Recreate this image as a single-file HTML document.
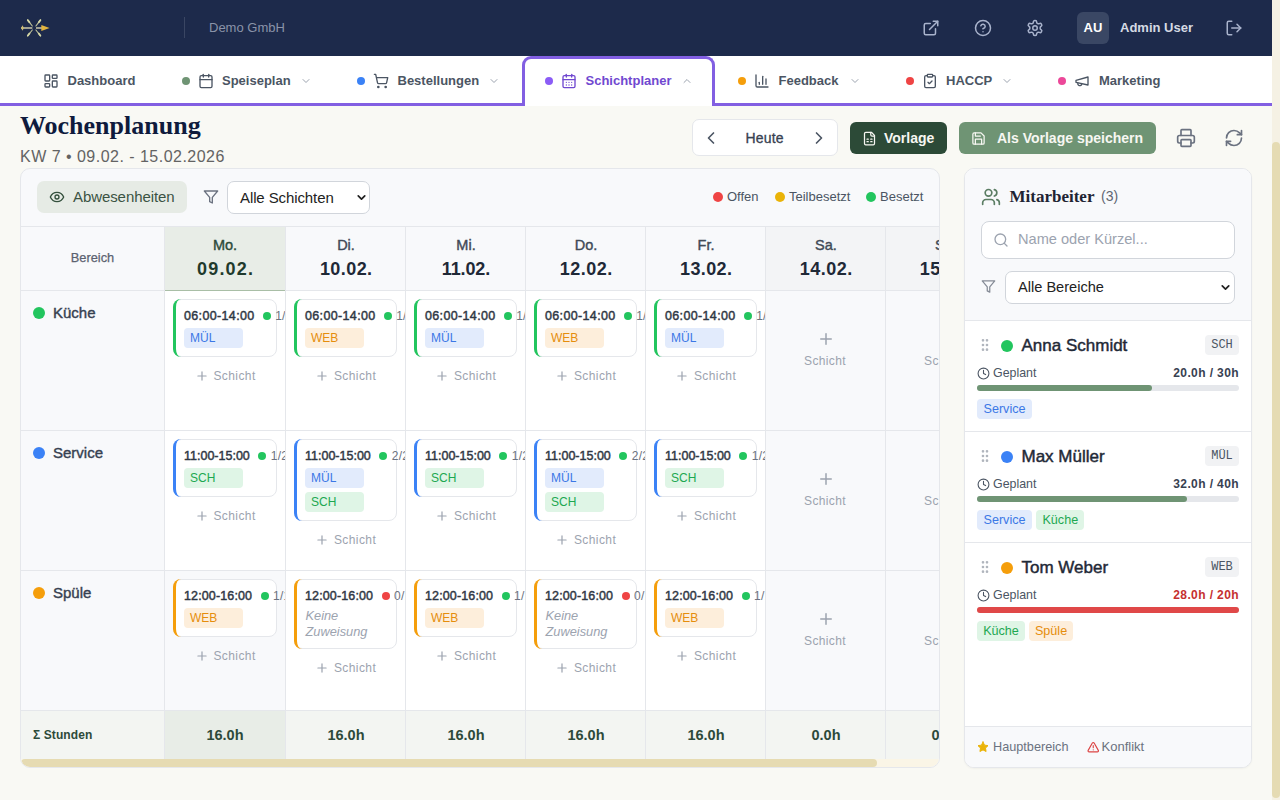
<!DOCTYPE html><html><head><meta charset="utf-8"><style>
*{box-sizing:border-box;margin:0;padding:0}
html,body{width:1280px;height:800px;overflow:hidden}
body{background:#f9f9f4;font-family:"Liberation Sans",sans-serif;position:relative;color:#1f2937}
.a{position:absolute;white-space:nowrap}
svg{display:block}
.hdr{position:absolute;left:0;top:0;width:1272px;height:56px;background:#1d2a4b}
.nav{position:absolute;left:0;top:56px;width:1272px;height:50px;background:#fff;border-bottom:3px solid #825fe2}
.sbv{position:absolute;left:1272px;top:0;width:8px;height:800px;background:#f5f1e4}
.sbv i{position:absolute;left:0;top:142px;width:8px;height:656px;border-radius:4px;background:#e5dbb3}
.dot{position:absolute;width:8px;height:8px;border-radius:50%}
.tab{font-size:13px;font-weight:bold;color:#4b5563}
.card{position:absolute;left:20px;top:168px;width:920px;height:600px;border:1px solid #e5e7eb;border-radius:10px;background:#f8f9fb;overflow:hidden}
.panel{position:absolute;left:964px;top:168px;width:288px;height:600px;border:1px solid #e5e7eb;border-radius:10px;background:#fff;overflow:hidden;box-shadow:0 1px 2px rgba(0,0,0,.04)}
.vl{position:absolute;width:1px;background:#e5e7eb}
.hl{position:absolute;height:1px;background:#e5e7eb}
.sc{position:absolute;width:103px;background:#fff;border:1px solid #e5e7eb;border-radius:8px;padding:0}
.sc .bl{position:absolute;left:-1px;top:-1px;bottom:-1px;width:10px;border-left:3px solid;border-radius:8px 0 0 8px}
.tm{position:absolute;left:10px;top:8px;font-size:12px;font-weight:bold;letter-spacing:.5px;color:#374151;line-height:17px}
.cnt{position:absolute;top:8px;font-size:12px;color:#6b7280;line-height:17px;letter-spacing:.2px}
.bd{position:absolute;left:10px;width:59px;height:20px;border-radius:4px;font-size:12px;line-height:20px;padding-left:6px}
.b-m{background:#e2ebfc;color:#3b78e6}
.b-s{background:#dff5e6;color:#1da851}
.b-w{background:#fdeedb;color:#e58d0c}
.add{position:absolute;font-size:12px;letter-spacing:.35px;color:#9ca3af;line-height:16px}
</style></head><body>
<div class="hdr"></div>
<svg class="a" style="left:16px;top:16px" width="40" height="24" viewBox="16 16 40 24">
<line x1="21" y1="28" x2="32.3" y2="28" stroke="#b9b6a0" stroke-width="1.7"/>
<line x1="36" y1="28" x2="43" y2="28" stroke="#b9b6a0" stroke-width="1.7"/>
<polygon points="41.3,25 49.6,28 41.3,31" fill="#e3b43f"/>
<polygon points="22.5,25.3 23.9,28 22.5,30.7 21.1,28" fill="#cdbb72"/>
<line x1="27.6" y1="19.8" x2="32.3" y2="26" stroke="#c4c69a" stroke-width="1.1" stroke-linecap="round"/>
<line x1="40.6" y1="19.8" x2="35.9" y2="26" stroke="#c4c69a" stroke-width="1.1" stroke-linecap="round"/>
<line x1="27.6" y1="36" x2="32.3" y2="30" stroke="#c4c69a" stroke-width="1.1" stroke-linecap="round"/>
<line x1="40.6" y1="36" x2="35.9" y2="30" stroke="#c4c69a" stroke-width="1.1" stroke-linecap="round"/>
<line x1="27.9" y1="20.3" x2="29.4" y2="22.3" stroke="#d5d7a6" stroke-width="1.9" stroke-linecap="round"/>
<line x1="40.3" y1="20.3" x2="38.8" y2="22.3" stroke="#d5d7a6" stroke-width="1.9" stroke-linecap="round"/>
<line x1="27.9" y1="35.5" x2="29.4" y2="33.5" stroke="#d5d7a6" stroke-width="1.9" stroke-linecap="round"/>
<line x1="40.3" y1="35.5" x2="38.8" y2="33.5" stroke="#d5d7a6" stroke-width="1.9" stroke-linecap="round"/>
</svg>
<div class="a" style="left:184px;top:17px;width:1px;height:21px;background:#3a4663"></div>
<div class="a" style="left:209px;top:19px;font-size:13px;color:#8a93a8;line-height:18px">Demo GmbH</div>
<div class="a" style="left:922px;top:19px;"><svg width="18" height="18" viewBox="0 0 24 24" fill="none" stroke="#a9b3cc" stroke-width="2" stroke-linecap="round" stroke-linejoin="round" ><path d="M15 3h6v6"/><path d="M10 14 21 3"/><path d="M18 13v6a2 2 0 0 1-2 2H5a2 2 0 0 1-2-2V8a2 2 0 0 1 2-2h6"/></svg></div>
<div class="a" style="left:974px;top:19px;"><svg width="18" height="18" viewBox="0 0 24 24" fill="none" stroke="#a9b3cc" stroke-width="2" stroke-linecap="round" stroke-linejoin="round" ><circle cx="12" cy="12" r="10"/><path d="M9.09 9a3 3 0 0 1 5.83 1c0 2-3 3-3 3"/><path d="M12 17h.01"/></svg></div>
<div class="a" style="left:1026px;top:19px;"><svg width="18" height="18" viewBox="0 0 24 24" fill="none" stroke="#a9b3cc" stroke-width="2" stroke-linecap="round" stroke-linejoin="round" ><path d="M12.22 2h-.44a2 2 0 0 0-2 2v.18a2 2 0 0 1-1 1.73l-.43.25a2 2 0 0 1-2 0l-.15-.08a2 2 0 0 0-2.73.73l-.22.38a2 2 0 0 0 .73 2.730l.15.1a2 2 0 0 1 1 1.72v.51a2 2 0 0 1-1 1.74l-.15.09a2 2 0 0 0-.73 2.73l.22.38a2 2 0 0 0 2.73.73l.15-.08a2 2 0 0 1 2 0l.43.25a2 2 0 0 1 1 1.73V20a2 2 0 0 0 2 2h.44a2 2 0 0 0 2-2v-.18a2 2 0 0 1 1-1.73l.43-.25a2 2 0 0 1 2 0l.15.08a2 2 0 0 0 2.73-.73l.22-.39a2 2 0 0 0-.73-2.73l-.15-.08a2 2 0 0 1-1-1.74v-.5a2 2 0 0 1 1-1.74l.15-.09a2 2 0 0 0 .73-2.73l-.22-.38a2 2 0 0 0-2.73-.73l-.15.08a2 2 0 0 1-2 0l-.43-.25a2 2 0 0 1-1-1.73V4a2 2 0 0 0-2-2z"/><circle cx="12" cy="12" r="3"/></svg></div>
<div class="a" style="left:1077px;top:12px;width:32px;height:32px;border-radius:6px;background:#3a4764;color:#fff;font-size:13px;font-weight:bold;text-align:center;line-height:32px">AU</div>
<div class="a" style="left:1120px;top:19px;font-size:13px;font-weight:bold;color:#d5dae4;line-height:18px">Admin User</div>
<div class="a" style="left:1225px;top:19px;"><svg width="18" height="18" viewBox="0 0 24 24" fill="none" stroke="#a9b3cc" stroke-width="2" stroke-linecap="round" stroke-linejoin="round" ><path d="M9 21H5a2 2 0 0 1-2-2V5a2 2 0 0 1 2-2h4"/><polyline points="16 17 21 12 16 7"/><line x1="21" x2="9" y1="12" y2="12"/></svg></div>
<div class="nav"></div>
<div class="a" style="left:522px;top:56px;width:193px;height:50px;border:3px solid #825fe2;border-bottom:none;border-radius:9px 9px 0 0;background:#fff"></div>
<div class="a" style="left:43px;top:73px;"><svg width="16" height="16" viewBox="0 0 24 24" fill="none" stroke="#4b5563" stroke-width="2" stroke-linecap="round" stroke-linejoin="round" ><rect width="7" height="9" x="3" y="3" rx="1"/><rect width="7" height="5" x="14" y="3" rx="1"/><rect width="7" height="9" x="14" y="12" rx="1"/><rect width="7" height="5" x="3" y="16" rx="1"/></svg></div>
<div class="a" style="left:67.5px;top:72px;font-size:13px;font-weight:bold;color:#4b5563;line-height:17px">Dashboard</div>
<div class="dot" style="left:182px;top:77px;background:#6f9474"></div>
<div class="a" style="left:198px;top:73px;"><svg width="16" height="16" viewBox="0 0 24 24" fill="none" stroke="#4b5563" stroke-width="2" stroke-linecap="round" stroke-linejoin="round" ><path d="M8 2v4"/><path d="M16 2v4"/><rect width="18" height="18" x="3" y="4" rx="2"/><path d="M3 10h18"/></svg></div>
<div class="a" style="left:222px;top:72px;font-size:13px;font-weight:bold;color:#4b5563;line-height:17px">Speiseplan</div>
<div class="a" style="left:300px;top:75px;"><svg width="12" height="12" viewBox="0 0 24 24" fill="none" stroke="#9ca3af" stroke-width="2" stroke-linecap="round" stroke-linejoin="round" ><path d="m6 9 6 6 6-6"/></svg></div>
<div class="dot" style="left:357px;top:77px;background:#3b82f6"></div>
<div class="a" style="left:373px;top:73px;"><svg width="16" height="16" viewBox="0 0 24 24" fill="none" stroke="#4b5563" stroke-width="2" stroke-linecap="round" stroke-linejoin="round" ><circle cx="8" cy="21" r="1"/><circle cx="19" cy="21" r="1"/><path d="M2.05 2.05h2l2.66 12.42a2 2 0 0 0 2 1.58h9.78a2 2 0 0 0 1.95-1.57l1.65-7.43H5.12"/></svg></div>
<div class="a" style="left:397.5px;top:72px;font-size:13px;font-weight:bold;color:#4b5563;line-height:17px">Bestellungen</div>
<div class="a" style="left:488px;top:75px;"><svg width="12" height="12" viewBox="0 0 24 24" fill="none" stroke="#9ca3af" stroke-width="2" stroke-linecap="round" stroke-linejoin="round" ><path d="m6 9 6 6 6-6"/></svg></div>
<div class="dot" style="left:545px;top:77px;background:#8b5cf6"></div>
<div class="a" style="left:561px;top:73px;"><svg width="16" height="16" viewBox="0 0 24 24" fill="none" stroke="#7048d0" stroke-width="2" stroke-linecap="round" stroke-linejoin="round" ><path d="M8 2v4"/><path d="M16 2v4"/><rect width="18" height="18" x="3" y="4" rx="2"/><path d="M3 10h18"/><path d="M8 14h.01"/><path d="M12 14h.01"/><path d="M16 14h.01"/><path d="M8 18h.01"/><path d="M12 18h.01"/><path d="M16 18h.01"/></svg></div>
<div class="a" style="left:585.5px;top:72px;font-size:13px;font-weight:bold;color:#7048d0;line-height:17px">Schichtplaner</div>
<div class="a" style="left:681px;top:75px;"><svg width="12" height="12" viewBox="0 0 24 24" fill="none" stroke="#9ca3af" stroke-width="2" stroke-linecap="round" stroke-linejoin="round" ><path d="m18 15-6-6-6 6"/></svg></div>
<div class="dot" style="left:738px;top:77px;background:#f59e0b"></div>
<div class="a" style="left:754px;top:73px;"><svg width="16" height="16" viewBox="0 0 24 24" fill="none" stroke="#4b5563" stroke-width="2" stroke-linecap="round" stroke-linejoin="round" ><path d="M3 3v16a2 2 0 0 0 2 2h16"/><path d="M18 17V9"/><path d="M13 17V5"/><path d="M8 17v-3"/></svg></div>
<div class="a" style="left:778.5px;top:72px;font-size:13px;font-weight:bold;color:#4b5563;line-height:17px">Feedback</div>
<div class="a" style="left:849px;top:75px;"><svg width="12" height="12" viewBox="0 0 24 24" fill="none" stroke="#9ca3af" stroke-width="2" stroke-linecap="round" stroke-linejoin="round" ><path d="m6 9 6 6 6-6"/></svg></div>
<div class="dot" style="left:906px;top:77px;background:#ef4444"></div>
<div class="a" style="left:922px;top:73px;"><svg width="16" height="16" viewBox="0 0 24 24" fill="none" stroke="#4b5563" stroke-width="2" stroke-linecap="round" stroke-linejoin="round" ><rect width="8" height="4" x="8" y="2" rx="1" ry="1"/><path d="M16 4h2a2 2 0 0 1 2 2v14a2 2 0 0 1-2 2H6a2 2 0 0 1-2-2V6a2 2 0 0 1 2-2h2"/><path d="m9 14 2 2 4-4"/></svg></div>
<div class="a" style="left:946px;top:72px;font-size:13px;font-weight:bold;color:#4b5563;line-height:17px">HACCP</div>
<div class="a" style="left:1001px;top:75px;"><svg width="12" height="12" viewBox="0 0 24 24" fill="none" stroke="#9ca3af" stroke-width="2" stroke-linecap="round" stroke-linejoin="round" ><path d="m6 9 6 6 6-6"/></svg></div>
<div class="dot" style="left:1058px;top:77px;background:#ec4899"></div>
<div class="a" style="left:1074px;top:73px;"><svg width="16" height="16" viewBox="0 0 24 24" fill="none" stroke="#4b5563" stroke-width="2" stroke-linecap="round" stroke-linejoin="round" ><path d="m3 11 18-5v12L3 14v-3z"/><path d="M11.6 16.8a3 3 0 1 1-5.8-1.6"/></svg></div>
<div class="a" style="left:1099px;top:72px;font-size:13px;font-weight:bold;color:#4b5563;line-height:17px">Marketing</div>
<div class="a" style="left:20px;top:111px;font-family:'Liberation Serif',serif;font-size:26px;font-weight:bold;color:#0f1b3d;line-height:30px">Wochenplanung</div>
<div class="a" style="left:20px;top:147px;font-size:16px;letter-spacing:.48px;color:#636363;line-height:20px">KW 7 • 09.02. - 15.02.2026</div>
<div class="a" style="left:692px;top:119px;width:146px;height:37px;background:#fff;border:1px solid #e5e7eb;border-radius:7px"></div>
<div class="a" style="left:701px;top:128.3px;"><svg width="20" height="20" viewBox="0 0 24 24" fill="none" stroke="#4b5563" stroke-width="2" stroke-linecap="round" stroke-linejoin="round" ><path d="m15 18-6-6 6-6"/></svg></div>
<div class="a" style="left:745.5px;top:129.7px;font-size:14px;color:#374151;line-height:17px;letter-spacing:.15px;-webkit-text-stroke:.3px #374151">Heute</div>
<div class="a" style="left:808.8px;top:128.3px;"><svg width="20" height="20" viewBox="0 0 24 24" fill="none" stroke="#4b5563" stroke-width="2" stroke-linecap="round" stroke-linejoin="round" ><path d="m9 18 6-6-6-6"/></svg></div>
<div class="a" style="left:850px;top:122px;width:97px;height:32px;background:#2c4a37;border-radius:6px"></div>
<div class="a" style="left:862px;top:130.5px;"><svg width="15" height="15" viewBox="0 0 24 24" fill="none" stroke="#f7f7f2" stroke-width="2" stroke-linecap="round" stroke-linejoin="round" ><path d="M15 2H6a2 2 0 0 0-2 2v16a2 2 0 0 0 2 2h12a2 2 0 0 0 2-2V7Z"/><path d="M14 2v4a2 2 0 0 0 2 2h4"/><path d="M8 13h2"/><path d="M14 13h2"/><path d="M8 17h2"/><path d="M14 17h2"/></svg></div>
<div class="a" style="left:884px;top:130px;font-size:14px;font-weight:bold;color:#f7f7f2;line-height:17px">Vorlage</div>
<div class="a" style="left:959px;top:122px;width:197px;height:32px;background:#6f9474;border-radius:6px"></div>
<div class="a" style="left:971px;top:130.5px;"><svg width="15" height="15" viewBox="0 0 24 24" fill="none" stroke="#f7f7f2" stroke-width="2" stroke-linecap="round" stroke-linejoin="round" ><path d="M19 21H5a2 2 0 0 1-2-2V5a2 2 0 0 1 2-2h11l5 5v11a2 2 0 0 1-2 2z"/><polyline points="17 21 17 13 7 13 7 21"/><polyline points="7 3 7 8 15 8"/></svg></div>
<div class="a" style="left:997px;top:130px;font-size:14px;font-weight:bold;color:#f7f7f2;line-height:17px">Als Vorlage speichern</div>
<div class="a" style="left:1176px;top:128px;"><svg width="20" height="20" viewBox="0 0 24 24" fill="none" stroke="#6b7280" stroke-width="2" stroke-linecap="round" stroke-linejoin="round" ><path d="M6 18H4a2 2 0 0 1-2-2v-5a2 2 0 0 1 2-2h16a2 2 0 0 1 2 2v5a2 2 0 0 1-2 2h-2"/><path d="M6 9V3a1 1 0 0 1 1-1h10a1 1 0 0 1 1 1v6"/><rect x="6" y="14" width="12" height="8" rx="1"/></svg></div>
<div class="a" style="left:1224px;top:128px;"><svg width="20" height="20" viewBox="0 0 24 24" fill="none" stroke="#6b7280" stroke-width="2" stroke-linecap="round" stroke-linejoin="round" ><path d="M3 12a9 9 0 0 1 9-9 9.75 9.75 0 0 1 6.74 2.74L21 8"/><path d="M21 3v5h-5"/><path d="M21 12a9 9 0 0 1-9 9 9.75 9.75 0 0 1-6.74-2.74L3 16"/><path d="M8 16H3v5"/></svg></div>
<div class="card">
<div class="a" style="left:16px;top:12px;width:150px;height:32px;border-radius:7px;background:#e6ebe5"></div>
<div class="a" style="left:28px;top:20px;"><svg width="16" height="16" viewBox="0 0 24 24" fill="none" stroke="#34503d" stroke-width="2" stroke-linecap="round" stroke-linejoin="round" ><path d="M2 12s3-7 10-7 10 7 10 7-3 7-10 7-10-7-10-7Z"/><circle cx="12" cy="12" r="3"/></svg></div>
<div class="a" style="left:52px;top:19px;font-size:15px;color:#3b5343;line-height:17px;letter-spacing:-.08px">Abwesenheiten</div>
<div class="a" style="left:182px;top:20px;"><svg width="16" height="16" viewBox="0 0 24 24" fill="none" stroke="#6b7280" stroke-width="2" stroke-linecap="round" stroke-linejoin="round" ><polygon points="22 3 2 3 10 12.46 10 19 14 21 14 12.46 22 3"/></svg></div>
<div class="a" style="left:206px;top:12px;width:143px;height:33px;border-radius:7px;background:#fff;border:1px solid #d1d5db"></div>
<div class="a" style="left:219px;top:20px;font-size:15px;color:#222;line-height:17px;letter-spacing:-.1px">Alle Schichten</div>
<div class="a" style="left:334px;top:22px;"><svg width="13" height="13" viewBox="0 0 24 24" fill="none" stroke="#222" stroke-width="3.2" stroke-linecap="round" stroke-linejoin="round" ><path d="m6 9 6 6 6-6"/></svg></div>
<div class="a" style="left:692px;top:23px;width:10px;height:10px;border-radius:50%;background:#ef4444"></div>
<div class="a" style="left:706px;top:20px;font-size:13px;color:#4b5563;line-height:16px">Offen</div>
<div class="a" style="left:754px;top:23px;width:10px;height:10px;border-radius:50%;background:#eab308"></div>
<div class="a" style="left:768px;top:20px;font-size:13px;color:#4b5563;line-height:16px">Teilbesetzt</div>
<div class="a" style="left:844.5px;top:23px;width:10px;height:10px;border-radius:50%;background:#22c55e"></div>
<div class="a" style="left:859px;top:20px;font-size:13px;color:#4b5563;line-height:16px">Besetzt</div>
<div class="a" style="left:0px;top:57px;width:918px;height:1px;background:#e5e7eb"></div>
<div class="a" style="left:0px;top:58px;width:918px;height:63px;background:#f8f9fb"></div>
<div class="a" style="left:144px;top:58px;width:120px;height:63px;background:#e8ede7"></div>
<div class="a" style="left:745px;top:58px;width:173px;height:63px;background:#f3f4f6"></div>
<div class="a" style="left:0px;top:122px;width:143px;height:419px;background:#f8f9fb"></div>
<div class="a" style="left:144px;top:122px;width:600px;height:419px;background:#fff"></div>
<div class="a" style="left:745px;top:122px;width:173px;height:419px;background:#f8f9fb"></div>
<div class="a" style="left:144px;top:402px;width:120px;height:139px;background:#f8f9fb"></div>
<div class="a" style="left:0px;top:542px;width:918px;height:48px;background:#f3f5f2"></div>
<div class="a" style="left:144px;top:542px;width:120px;height:48px;background:#e8ede7"></div>
<div class="a" style="left:143px;top:58px;width:1px;height:532px;background:#e5e7eb"></div>
<div class="a" style="left:264px;top:58px;width:1px;height:532px;background:#e5e7eb"></div>
<div class="a" style="left:384px;top:58px;width:1px;height:532px;background:#e5e7eb"></div>
<div class="a" style="left:504px;top:58px;width:1px;height:532px;background:#e5e7eb"></div>
<div class="a" style="left:624px;top:58px;width:1px;height:532px;background:#e5e7eb"></div>
<div class="a" style="left:744px;top:58px;width:1px;height:532px;background:#e5e7eb"></div>
<div class="a" style="left:864px;top:58px;width:1px;height:532px;background:#e5e7eb"></div>
<div class="a" style="left:0px;top:121px;width:918px;height:1px;background:#e5e7eb"></div>
<div class="a" style="left:0px;top:261px;width:918px;height:1px;background:#e5e7eb"></div>
<div class="a" style="left:0px;top:401px;width:918px;height:1px;background:#e5e7eb"></div>
<div class="a" style="left:0px;top:541px;width:918px;height:1px;background:#e5e7eb"></div>
<div class="a" style="left:144px;top:121px;width:120px;height:1px;background:#a9bea6"></div>
<div class="a" style="left:0px;top:82px;width:143px;text-align:center;font-size:12.8px;color:#5b6270;line-height:14px;-webkit-text-stroke:.25px #5b6270">Bereich</div>
<div class="a" style="left:144px;top:68px;width:120px;text-align:center;font-size:14.5px;color:#2d4a3a;line-height:17px;-webkit-text-stroke:.4px #2d4a3a">Mo.</div>
<div class="a" style="left:144px;top:90px;width:120px;text-align:center;font-size:18px;font-weight:bold;letter-spacing:1.15px;text-indent:1.15px;color:#1f3a2c;line-height:20px">09.02.</div>
<div class="a" style="left:265px;top:68px;width:120px;text-align:center;font-size:14.5px;color:#414a57;line-height:17px;-webkit-text-stroke:.4px #414a57">Di.</div>
<div class="a" style="left:265px;top:90px;width:120px;text-align:center;font-size:18px;font-weight:bold;letter-spacing:0.43px;text-indent:0.43px;color:#1f2937;line-height:20px">10.02.</div>
<div class="a" style="left:385px;top:68px;width:120px;text-align:center;font-size:14.5px;color:#414a57;line-height:17px;-webkit-text-stroke:.4px #414a57">Mi.</div>
<div class="a" style="left:385px;top:90px;width:120px;text-align:center;font-size:18px;font-weight:bold;letter-spacing:-0.1px;text-indent:-0.1px;color:#1f2937;line-height:20px">11.02.</div>
<div class="a" style="left:505px;top:68px;width:120px;text-align:center;font-size:14.5px;color:#414a57;line-height:17px;-webkit-text-stroke:.4px #414a57">Do.</div>
<div class="a" style="left:505px;top:90px;width:120px;text-align:center;font-size:18px;font-weight:bold;letter-spacing:0.47px;text-indent:0.47px;color:#1f2937;line-height:20px">12.02.</div>
<div class="a" style="left:625px;top:68px;width:120px;text-align:center;font-size:14.5px;color:#414a57;line-height:17px;-webkit-text-stroke:.4px #414a57">Fr.</div>
<div class="a" style="left:625px;top:90px;width:120px;text-align:center;font-size:18px;font-weight:bold;letter-spacing:0.4px;text-indent:0.4px;color:#1f2937;line-height:20px">13.02.</div>
<div class="a" style="left:745px;top:68px;width:120px;text-align:center;font-size:14.5px;color:#414a57;line-height:17px;-webkit-text-stroke:.4px #414a57">Sa.</div>
<div class="a" style="left:745px;top:90px;width:120px;text-align:center;font-size:18px;font-weight:bold;letter-spacing:0.52px;text-indent:0.52px;color:#1f2937;line-height:20px">14.02.</div>
<div class="a" style="left:865px;top:68px;width:120px;text-align:center;font-size:14.5px;color:#414a57;line-height:17px;-webkit-text-stroke:.4px #414a57">So.</div>
<div class="a" style="left:865px;top:90px;width:120px;text-align:center;font-size:18px;font-weight:bold;letter-spacing:0.45px;text-indent:0.45px;color:#1f2937;line-height:20px">15.02.</div>
<div class="a" style="left:12px;top:138px;width:12px;height:12px;border-radius:50%;background:#22c55e"></div>
<div class="a" style="left:32px;top:134.7px;font-size:15px;color:#374151;line-height:17px;-webkit-text-stroke:.4px #374151">Küche</div>
<div class="a" style="left:12px;top:278px;width:12px;height:12px;border-radius:50%;background:#3b82f6"></div>
<div class="a" style="left:32px;top:274.7px;font-size:15px;color:#374151;line-height:17px;-webkit-text-stroke:.4px #374151">Service</div>
<div class="a" style="left:12px;top:418px;width:12px;height:12px;border-radius:50%;background:#f59e0b"></div>
<div class="a" style="left:32px;top:414.70000000000005px;font-size:15px;color:#374151;line-height:17px;-webkit-text-stroke:.4px #374151">Spüle</div>
<div class="a" style="left:144px;top:122px;width:120px;height:139px;overflow:hidden">
<div class="sc" style="left:8px;top:8px;width:104px;height:58px;overflow:visible"><div class="bl" style="border-left-color:#22c55e"></div><div class="a" style="left:10px;top:8px;display:flex;align-items:center;height:17px"><span style="font-size:12.5px;letter-spacing:0.35px;color:#2f3744;line-height:17px;-webkit-text-stroke:.45px #2f3744">06:00-14:00</span><i style="display:block;width:8px;height:8px;border-radius:50%;background:#22c55e;margin-left:8.15px;margin-top:-2px"></i><span style="margin-left:4.5px;font-size:12px;color:#6b7280;line-height:17px;letter-spacing:.2px">1/1</span></div><div class="bd b-m" style="top:28px">MÜL</div></div>
<div class="a" style="left:29.5px;top:77.5px;"><svg width="14" height="14" viewBox="0 0 24 24" fill="none" stroke="#9ca3af" stroke-width="2.1" stroke-linecap="round" stroke-linejoin="round" ><path d="M5 12h14"/><path d="M12 5v14"/></svg></div>
<div class="a" style="left:48.400000000000006px;top:77px;font-size:12px;letter-spacing:.42px;color:#9ca3af;line-height:16px">Schicht</div>
</div>
<div class="a" style="left:265px;top:122px;width:119px;height:139px;overflow:hidden">
<div class="sc" style="left:8px;top:8px;width:103px;height:58px;overflow:visible"><div class="bl" style="border-left-color:#22c55e"></div><div class="a" style="left:10px;top:8px;display:flex;align-items:center;height:17px"><span style="font-size:12.5px;letter-spacing:0.35px;color:#2f3744;line-height:17px;-webkit-text-stroke:.45px #2f3744">06:00-14:00</span><i style="display:block;width:8px;height:8px;border-radius:50%;background:#22c55e;margin-left:8.15px;margin-top:-2px"></i><span style="margin-left:4.5px;font-size:12px;color:#6b7280;line-height:17px;letter-spacing:.2px">1/1</span></div><div class="bd b-w" style="top:28px">WEB</div></div>
<div class="a" style="left:29.0px;top:77.5px;"><svg width="14" height="14" viewBox="0 0 24 24" fill="none" stroke="#9ca3af" stroke-width="2.1" stroke-linecap="round" stroke-linejoin="round" ><path d="M5 12h14"/><path d="M12 5v14"/></svg></div>
<div class="a" style="left:47.89999999999998px;top:77px;font-size:12px;letter-spacing:.42px;color:#9ca3af;line-height:16px">Schicht</div>
</div>
<div class="a" style="left:385px;top:122px;width:119px;height:139px;overflow:hidden">
<div class="sc" style="left:8px;top:8px;width:103px;height:58px;overflow:visible"><div class="bl" style="border-left-color:#22c55e"></div><div class="a" style="left:10px;top:8px;display:flex;align-items:center;height:17px"><span style="font-size:12.5px;letter-spacing:0.35px;color:#2f3744;line-height:17px;-webkit-text-stroke:.45px #2f3744">06:00-14:00</span><i style="display:block;width:8px;height:8px;border-radius:50%;background:#22c55e;margin-left:8.15px;margin-top:-2px"></i><span style="margin-left:4.5px;font-size:12px;color:#6b7280;line-height:17px;letter-spacing:.2px">1/1</span></div><div class="bd b-m" style="top:28px">MÜL</div></div>
<div class="a" style="left:29.0px;top:77.5px;"><svg width="14" height="14" viewBox="0 0 24 24" fill="none" stroke="#9ca3af" stroke-width="2.1" stroke-linecap="round" stroke-linejoin="round" ><path d="M5 12h14"/><path d="M12 5v14"/></svg></div>
<div class="a" style="left:47.89999999999998px;top:77px;font-size:12px;letter-spacing:.42px;color:#9ca3af;line-height:16px">Schicht</div>
</div>
<div class="a" style="left:505px;top:122px;width:119px;height:139px;overflow:hidden">
<div class="sc" style="left:8px;top:8px;width:103px;height:58px;overflow:visible"><div class="bl" style="border-left-color:#22c55e"></div><div class="a" style="left:10px;top:8px;display:flex;align-items:center;height:17px"><span style="font-size:12.5px;letter-spacing:0.35px;color:#2f3744;line-height:17px;-webkit-text-stroke:.45px #2f3744">06:00-14:00</span><i style="display:block;width:8px;height:8px;border-radius:50%;background:#22c55e;margin-left:8.15px;margin-top:-2px"></i><span style="margin-left:4.5px;font-size:12px;color:#6b7280;line-height:17px;letter-spacing:.2px">1/1</span></div><div class="bd b-w" style="top:28px">WEB</div></div>
<div class="a" style="left:29.0px;top:77.5px;"><svg width="14" height="14" viewBox="0 0 24 24" fill="none" stroke="#9ca3af" stroke-width="2.1" stroke-linecap="round" stroke-linejoin="round" ><path d="M5 12h14"/><path d="M12 5v14"/></svg></div>
<div class="a" style="left:47.89999999999998px;top:77px;font-size:12px;letter-spacing:.42px;color:#9ca3af;line-height:16px">Schicht</div>
</div>
<div class="a" style="left:625px;top:122px;width:119px;height:139px;overflow:hidden">
<div class="sc" style="left:8px;top:8px;width:103px;height:58px;overflow:visible"><div class="bl" style="border-left-color:#22c55e"></div><div class="a" style="left:10px;top:8px;display:flex;align-items:center;height:17px"><span style="font-size:12.5px;letter-spacing:0.35px;color:#2f3744;line-height:17px;-webkit-text-stroke:.45px #2f3744">06:00-14:00</span><i style="display:block;width:8px;height:8px;border-radius:50%;background:#22c55e;margin-left:8.15px;margin-top:-2px"></i><span style="margin-left:4.5px;font-size:12px;color:#6b7280;line-height:17px;letter-spacing:.2px">1/1</span></div><div class="bd b-m" style="top:28px">MÜL</div></div>
<div class="a" style="left:29.0px;top:77.5px;"><svg width="14" height="14" viewBox="0 0 24 24" fill="none" stroke="#9ca3af" stroke-width="2.1" stroke-linecap="round" stroke-linejoin="round" ><path d="M5 12h14"/><path d="M12 5v14"/></svg></div>
<div class="a" style="left:47.89999999999998px;top:77px;font-size:12px;letter-spacing:.42px;color:#9ca3af;line-height:16px">Schicht</div>
</div>
<div class="a" style="left:144px;top:262px;width:120px;height:139px;overflow:hidden">
<div class="sc" style="left:8px;top:8px;width:104px;height:58px;overflow:visible"><div class="bl" style="border-left-color:#3b82f6"></div><div class="a" style="left:10px;top:8px;display:flex;align-items:center;height:17px"><span style="font-size:12.5px;letter-spacing:0px;color:#2f3744;line-height:17px;-webkit-text-stroke:.45px #2f3744">11:00-15:00</span><i style="display:block;width:8px;height:8px;border-radius:50%;background:#22c55e;margin-left:8.50px;margin-top:-2px"></i><span style="margin-left:4.5px;font-size:12px;color:#6b7280;line-height:17px;letter-spacing:.2px">1/2</span></div><div class="bd b-s" style="top:28px">SCH</div></div>
<div class="a" style="left:29.5px;top:77.5px;"><svg width="14" height="14" viewBox="0 0 24 24" fill="none" stroke="#9ca3af" stroke-width="2.1" stroke-linecap="round" stroke-linejoin="round" ><path d="M5 12h14"/><path d="M12 5v14"/></svg></div>
<div class="a" style="left:48.400000000000006px;top:77px;font-size:12px;letter-spacing:.42px;color:#9ca3af;line-height:16px">Schicht</div>
</div>
<div class="a" style="left:265px;top:262px;width:119px;height:139px;overflow:hidden">
<div class="sc" style="left:8px;top:8px;width:103px;height:82px;overflow:visible"><div class="bl" style="border-left-color:#3b82f6"></div><div class="a" style="left:10px;top:8px;display:flex;align-items:center;height:17px"><span style="font-size:12.5px;letter-spacing:0px;color:#2f3744;line-height:17px;-webkit-text-stroke:.45px #2f3744">11:00-15:00</span><i style="display:block;width:8px;height:8px;border-radius:50%;background:#22c55e;margin-left:8.50px;margin-top:-2px"></i><span style="margin-left:4.5px;font-size:12px;color:#6b7280;line-height:17px;letter-spacing:.2px">2/2</span></div><div class="bd b-m" style="top:28px">MÜL</div><div class="bd b-s" style="top:52px">SCH</div></div>
<div class="a" style="left:29.0px;top:101.5px;"><svg width="14" height="14" viewBox="0 0 24 24" fill="none" stroke="#9ca3af" stroke-width="2.1" stroke-linecap="round" stroke-linejoin="round" ><path d="M5 12h14"/><path d="M12 5v14"/></svg></div>
<div class="a" style="left:47.89999999999998px;top:101px;font-size:12px;letter-spacing:.42px;color:#9ca3af;line-height:16px">Schicht</div>
</div>
<div class="a" style="left:385px;top:262px;width:119px;height:139px;overflow:hidden">
<div class="sc" style="left:8px;top:8px;width:103px;height:58px;overflow:visible"><div class="bl" style="border-left-color:#3b82f6"></div><div class="a" style="left:10px;top:8px;display:flex;align-items:center;height:17px"><span style="font-size:12.5px;letter-spacing:0px;color:#2f3744;line-height:17px;-webkit-text-stroke:.45px #2f3744">11:00-15:00</span><i style="display:block;width:8px;height:8px;border-radius:50%;background:#22c55e;margin-left:8.50px;margin-top:-2px"></i><span style="margin-left:4.5px;font-size:12px;color:#6b7280;line-height:17px;letter-spacing:.2px">1/2</span></div><div class="bd b-s" style="top:28px">SCH</div></div>
<div class="a" style="left:29.0px;top:77.5px;"><svg width="14" height="14" viewBox="0 0 24 24" fill="none" stroke="#9ca3af" stroke-width="2.1" stroke-linecap="round" stroke-linejoin="round" ><path d="M5 12h14"/><path d="M12 5v14"/></svg></div>
<div class="a" style="left:47.89999999999998px;top:77px;font-size:12px;letter-spacing:.42px;color:#9ca3af;line-height:16px">Schicht</div>
</div>
<div class="a" style="left:505px;top:262px;width:119px;height:139px;overflow:hidden">
<div class="sc" style="left:8px;top:8px;width:103px;height:82px;overflow:visible"><div class="bl" style="border-left-color:#3b82f6"></div><div class="a" style="left:10px;top:8px;display:flex;align-items:center;height:17px"><span style="font-size:12.5px;letter-spacing:0px;color:#2f3744;line-height:17px;-webkit-text-stroke:.45px #2f3744">11:00-15:00</span><i style="display:block;width:8px;height:8px;border-radius:50%;background:#22c55e;margin-left:8.50px;margin-top:-2px"></i><span style="margin-left:4.5px;font-size:12px;color:#6b7280;line-height:17px;letter-spacing:.2px">2/2</span></div><div class="bd b-m" style="top:28px">MÜL</div><div class="bd b-s" style="top:52px">SCH</div></div>
<div class="a" style="left:29.0px;top:101.5px;"><svg width="14" height="14" viewBox="0 0 24 24" fill="none" stroke="#9ca3af" stroke-width="2.1" stroke-linecap="round" stroke-linejoin="round" ><path d="M5 12h14"/><path d="M12 5v14"/></svg></div>
<div class="a" style="left:47.89999999999998px;top:101px;font-size:12px;letter-spacing:.42px;color:#9ca3af;line-height:16px">Schicht</div>
</div>
<div class="a" style="left:625px;top:262px;width:119px;height:139px;overflow:hidden">
<div class="sc" style="left:8px;top:8px;width:103px;height:58px;overflow:visible"><div class="bl" style="border-left-color:#3b82f6"></div><div class="a" style="left:10px;top:8px;display:flex;align-items:center;height:17px"><span style="font-size:12.5px;letter-spacing:0px;color:#2f3744;line-height:17px;-webkit-text-stroke:.45px #2f3744">11:00-15:00</span><i style="display:block;width:8px;height:8px;border-radius:50%;background:#22c55e;margin-left:8.50px;margin-top:-2px"></i><span style="margin-left:4.5px;font-size:12px;color:#6b7280;line-height:17px;letter-spacing:.2px">1/2</span></div><div class="bd b-s" style="top:28px">SCH</div></div>
<div class="a" style="left:29.0px;top:77.5px;"><svg width="14" height="14" viewBox="0 0 24 24" fill="none" stroke="#9ca3af" stroke-width="2.1" stroke-linecap="round" stroke-linejoin="round" ><path d="M5 12h14"/><path d="M12 5v14"/></svg></div>
<div class="a" style="left:47.89999999999998px;top:77px;font-size:12px;letter-spacing:.42px;color:#9ca3af;line-height:16px">Schicht</div>
</div>
<div class="a" style="left:144px;top:402px;width:120px;height:139px;overflow:hidden">
<div class="sc" style="left:8px;top:8px;width:104px;height:58px;overflow:visible"><div class="bl" style="border-left-color:#f59e0b"></div><div class="a" style="left:10px;top:8px;display:flex;align-items:center;height:17px"><span style="font-size:12.5px;letter-spacing:0.13px;color:#2f3744;line-height:17px;-webkit-text-stroke:.45px #2f3744">12:00-16:00</span><i style="display:block;width:8px;height:8px;border-radius:50%;background:#22c55e;margin-left:8.37px;margin-top:-2px"></i><span style="margin-left:4.5px;font-size:12px;color:#6b7280;line-height:17px;letter-spacing:.2px">1/1</span></div><div class="bd b-w" style="top:28px">WEB</div></div>
<div class="a" style="left:29.5px;top:77.5px;"><svg width="14" height="14" viewBox="0 0 24 24" fill="none" stroke="#9ca3af" stroke-width="2.1" stroke-linecap="round" stroke-linejoin="round" ><path d="M5 12h14"/><path d="M12 5v14"/></svg></div>
<div class="a" style="left:48.400000000000006px;top:77px;font-size:12px;letter-spacing:.42px;color:#9ca3af;line-height:16px">Schicht</div>
</div>
<div class="a" style="left:265px;top:402px;width:119px;height:139px;overflow:hidden">
<div class="sc" style="left:8px;top:8px;width:103px;height:70px;overflow:visible"><div class="bl" style="border-left-color:#f59e0b"></div><div class="a" style="left:10px;top:8px;display:flex;align-items:center;height:17px"><span style="font-size:12.5px;letter-spacing:0.13px;color:#2f3744;line-height:17px;-webkit-text-stroke:.45px #2f3744">12:00-16:00</span><i style="display:block;width:8px;height:8px;border-radius:50%;background:#ef4444;margin-left:8.37px;margin-top:-2px"></i><span style="margin-left:4.5px;font-size:12px;color:#6b7280;line-height:17px;letter-spacing:.2px">0/1</span></div><div class="a" style="left:10.5px;top:28px;font-size:12.8px;font-style:italic;color:#9ca3af;line-height:16px;white-space:normal;width:80px">Keine Zuweisung</div></div>
<div class="a" style="left:29.0px;top:89.5px;"><svg width="14" height="14" viewBox="0 0 24 24" fill="none" stroke="#9ca3af" stroke-width="2.1" stroke-linecap="round" stroke-linejoin="round" ><path d="M5 12h14"/><path d="M12 5v14"/></svg></div>
<div class="a" style="left:47.89999999999998px;top:89px;font-size:12px;letter-spacing:.42px;color:#9ca3af;line-height:16px">Schicht</div>
</div>
<div class="a" style="left:385px;top:402px;width:119px;height:139px;overflow:hidden">
<div class="sc" style="left:8px;top:8px;width:103px;height:58px;overflow:visible"><div class="bl" style="border-left-color:#f59e0b"></div><div class="a" style="left:10px;top:8px;display:flex;align-items:center;height:17px"><span style="font-size:12.5px;letter-spacing:0.13px;color:#2f3744;line-height:17px;-webkit-text-stroke:.45px #2f3744">12:00-16:00</span><i style="display:block;width:8px;height:8px;border-radius:50%;background:#22c55e;margin-left:8.37px;margin-top:-2px"></i><span style="margin-left:4.5px;font-size:12px;color:#6b7280;line-height:17px;letter-spacing:.2px">1/1</span></div><div class="bd b-w" style="top:28px">WEB</div></div>
<div class="a" style="left:29.0px;top:77.5px;"><svg width="14" height="14" viewBox="0 0 24 24" fill="none" stroke="#9ca3af" stroke-width="2.1" stroke-linecap="round" stroke-linejoin="round" ><path d="M5 12h14"/><path d="M12 5v14"/></svg></div>
<div class="a" style="left:47.89999999999998px;top:77px;font-size:12px;letter-spacing:.42px;color:#9ca3af;line-height:16px">Schicht</div>
</div>
<div class="a" style="left:505px;top:402px;width:119px;height:139px;overflow:hidden">
<div class="sc" style="left:8px;top:8px;width:103px;height:70px;overflow:visible"><div class="bl" style="border-left-color:#f59e0b"></div><div class="a" style="left:10px;top:8px;display:flex;align-items:center;height:17px"><span style="font-size:12.5px;letter-spacing:0.13px;color:#2f3744;line-height:17px;-webkit-text-stroke:.45px #2f3744">12:00-16:00</span><i style="display:block;width:8px;height:8px;border-radius:50%;background:#ef4444;margin-left:8.37px;margin-top:-2px"></i><span style="margin-left:4.5px;font-size:12px;color:#6b7280;line-height:17px;letter-spacing:.2px">0/1</span></div><div class="a" style="left:10.5px;top:28px;font-size:12.8px;font-style:italic;color:#9ca3af;line-height:16px;white-space:normal;width:80px">Keine Zuweisung</div></div>
<div class="a" style="left:29.0px;top:89.5px;"><svg width="14" height="14" viewBox="0 0 24 24" fill="none" stroke="#9ca3af" stroke-width="2.1" stroke-linecap="round" stroke-linejoin="round" ><path d="M5 12h14"/><path d="M12 5v14"/></svg></div>
<div class="a" style="left:47.89999999999998px;top:89px;font-size:12px;letter-spacing:.42px;color:#9ca3af;line-height:16px">Schicht</div>
</div>
<div class="a" style="left:625px;top:402px;width:119px;height:139px;overflow:hidden">
<div class="sc" style="left:8px;top:8px;width:103px;height:58px;overflow:visible"><div class="bl" style="border-left-color:#f59e0b"></div><div class="a" style="left:10px;top:8px;display:flex;align-items:center;height:17px"><span style="font-size:12.5px;letter-spacing:0.13px;color:#2f3744;line-height:17px;-webkit-text-stroke:.45px #2f3744">12:00-16:00</span><i style="display:block;width:8px;height:8px;border-radius:50%;background:#22c55e;margin-left:8.37px;margin-top:-2px"></i><span style="margin-left:4.5px;font-size:12px;color:#6b7280;line-height:17px;letter-spacing:.2px">1/1</span></div><div class="bd b-w" style="top:28px">WEB</div></div>
<div class="a" style="left:29.0px;top:77.5px;"><svg width="14" height="14" viewBox="0 0 24 24" fill="none" stroke="#9ca3af" stroke-width="2.1" stroke-linecap="round" stroke-linejoin="round" ><path d="M5 12h14"/><path d="M12 5v14"/></svg></div>
<div class="a" style="left:47.89999999999998px;top:77px;font-size:12px;letter-spacing:.42px;color:#9ca3af;line-height:16px">Schicht</div>
</div>
<div class="a" style="left:795.5px;top:161px;"><svg width="18" height="18" viewBox="0 0 24 24" fill="none" stroke="#9ca3af" stroke-width="2" stroke-linecap="round" stroke-linejoin="round" ><path d="M5 12h14"/><path d="M12 5v14"/></svg></div>
<div class="a" style="left:744px;top:184px;width:120px;text-align:center;font-size:12px;letter-spacing:.35px;color:#9ca3af;line-height:16px">Schicht</div>
<div class="a" style="left:795.5px;top:301px;"><svg width="18" height="18" viewBox="0 0 24 24" fill="none" stroke="#9ca3af" stroke-width="2" stroke-linecap="round" stroke-linejoin="round" ><path d="M5 12h14"/><path d="M12 5v14"/></svg></div>
<div class="a" style="left:744px;top:324px;width:120px;text-align:center;font-size:12px;letter-spacing:.35px;color:#9ca3af;line-height:16px">Schicht</div>
<div class="a" style="left:795.5px;top:441px;"><svg width="18" height="18" viewBox="0 0 24 24" fill="none" stroke="#9ca3af" stroke-width="2" stroke-linecap="round" stroke-linejoin="round" ><path d="M5 12h14"/><path d="M12 5v14"/></svg></div>
<div class="a" style="left:744px;top:464px;width:120px;text-align:center;font-size:12px;letter-spacing:.35px;color:#9ca3af;line-height:16px">Schicht</div>
<div class="a" style="left:915.5px;top:161px;"><svg width="18" height="18" viewBox="0 0 24 24" fill="none" stroke="#9ca3af" stroke-width="2" stroke-linecap="round" stroke-linejoin="round" ><path d="M5 12h14"/><path d="M12 5v14"/></svg></div>
<div class="a" style="left:864px;top:184px;width:120px;text-align:center;font-size:12px;letter-spacing:.35px;color:#9ca3af;line-height:16px">Schicht</div>
<div class="a" style="left:915.5px;top:301px;"><svg width="18" height="18" viewBox="0 0 24 24" fill="none" stroke="#9ca3af" stroke-width="2" stroke-linecap="round" stroke-linejoin="round" ><path d="M5 12h14"/><path d="M12 5v14"/></svg></div>
<div class="a" style="left:864px;top:324px;width:120px;text-align:center;font-size:12px;letter-spacing:.35px;color:#9ca3af;line-height:16px">Schicht</div>
<div class="a" style="left:915.5px;top:441px;"><svg width="18" height="18" viewBox="0 0 24 24" fill="none" stroke="#9ca3af" stroke-width="2" stroke-linecap="round" stroke-linejoin="round" ><path d="M5 12h14"/><path d="M12 5v14"/></svg></div>
<div class="a" style="left:864px;top:464px;width:120px;text-align:center;font-size:12px;letter-spacing:.35px;color:#9ca3af;line-height:16px">Schicht</div>
<div class="a" style="left:12px;top:558px;font-size:12px;font-weight:bold;color:#2d4a3a;line-height:16px;letter-spacing:.1px">Σ Stunden</div>
<div class="a" style="left:144px;top:557px;width:120px;text-align:center;font-size:14.5px;font-weight:bold;color:#2d4a3a;line-height:18px">16.0h</div>
<div class="a" style="left:265px;top:557px;width:120px;text-align:center;font-size:14.5px;font-weight:bold;color:#2d4a3a;line-height:18px">16.0h</div>
<div class="a" style="left:385px;top:557px;width:120px;text-align:center;font-size:14.5px;font-weight:bold;color:#2d4a3a;line-height:18px">16.0h</div>
<div class="a" style="left:505px;top:557px;width:120px;text-align:center;font-size:14.5px;font-weight:bold;color:#2d4a3a;line-height:18px">16.0h</div>
<div class="a" style="left:625px;top:557px;width:120px;text-align:center;font-size:14.5px;font-weight:bold;color:#2d4a3a;line-height:18px">16.0h</div>
<div class="a" style="left:745px;top:557px;width:120px;text-align:center;font-size:14.5px;font-weight:bold;color:#2d4a3a;line-height:18px">0.0h</div>
<div class="a" style="left:865px;top:557px;width:120px;text-align:center;font-size:14.5px;font-weight:bold;color:#2d4a3a;line-height:18px">0.0h</div>
<div class="a" style="left:0px;top:590px;width:918px;height:8px;background:#faf5e6"></div>
<div class="a" style="left:0px;top:590px;width:856px;height:8px;border-radius:4px;background:#e6dbb2"></div>
</div>
<div class="panel">
<div class="a" style="left:0px;top:0px;width:286px;height:151px;background:#f8f9fb"></div>
<div class="a" style="left:0px;top:151px;width:286px;height:1px;background:#e5e7eb"></div>
<div class="a" style="left:16px;top:18px;"><svg width="20" height="20" viewBox="0 0 24 24" fill="none" stroke="#5b7d63" stroke-width="2" stroke-linecap="round" stroke-linejoin="round" ><path d="M16 21v-2a4 4 0 0 0-4-4H6a4 4 0 0 0-4 4v2"/><circle cx="9" cy="7" r="4"/><path d="M22 21v-2a4 4 0 0 0-3-3.870"/><path d="M16 3.13a4 4 0 0 1 0 7.75"/></svg></div>
<div class="a" style="left:44.5px;top:17px;font-family:'Liberation Serif',serif;font-size:17px;font-weight:bold;color:#1f2433;line-height:22px">Mitarbeiter</div>
<div class="a" style="left:136px;top:18px;font-size:14px;color:#5f6672;line-height:18px">(3)</div>
<div class="a" style="left:16px;top:52px;width:254px;height:38px;border-radius:8px;background:#fff;border:1px solid #d1d5db"></div>
<div class="a" style="left:28px;top:63px;"><svg width="16" height="16" viewBox="0 0 24 24" fill="none" stroke="#9ca3af" stroke-width="2" stroke-linecap="round" stroke-linejoin="round" ><circle cx="11" cy="11" r="8"/><path d="m21 21-4.3-4.3"/></svg></div>
<div class="a" style="left:53px;top:62px;font-size:14.6px;color:#9ca3af;line-height:17px">Name oder Kürzel...</div>
<div class="a" style="left:16px;top:110px;"><svg width="15" height="15" viewBox="0 0 24 24" fill="none" stroke="#858b96" stroke-width="2" stroke-linecap="round" stroke-linejoin="round" ><polygon points="22 3 2 3 10 12.46 10 19 14 21 14 12.46 22 3"/></svg></div>
<div class="a" style="left:40px;top:102px;width:230px;height:33px;border-radius:7px;background:#fff;border:1px solid #d1d5db"></div>
<div class="a" style="left:53px;top:110px;font-size:14.6px;color:#222;line-height:17px">Alle Bereiche</div>
<div class="a" style="left:254px;top:112px;"><svg width="13" height="13" viewBox="0 0 24 24" fill="none" stroke="#222" stroke-width="3.2" stroke-linecap="round" stroke-linejoin="round" ><path d="m6 9 6 6 6-6"/></svg></div>
<div class="a" style="left:12px;top:168px;"><svg width="16" height="16" viewBox="0 0 24 24" fill="none" stroke="#b0b5bd" stroke-width="2" stroke-linecap="round" stroke-linejoin="round" ><circle cx="9" cy="12" r="1"/><circle cx="9" cy="5" r="1"/><circle cx="9" cy="19" r="1"/><circle cx="15" cy="12" r="1"/><circle cx="15" cy="5" r="1"/><circle cx="15" cy="19" r="1"/></svg></div>
<div class="a" style="left:35.5px;top:170.5px;width:12px;height:12px;border-radius:50%;background:#22c55e"></div>
<div class="a" style="left:56.5px;top:166.5px;font-size:17px;color:#1f2937;line-height:19px;-webkit-text-stroke:.45px #1f2937">Anna Schmidt</div>
<div class="a" style="left:240px;top:166px;width:34px;height:20px;border-radius:4px;background:#f1f2f4;font-family:'Liberation Mono',monospace;font-size:12px;color:#4b5563;text-align:center;line-height:20px">SCH</div>
<div class="a" style="left:12px;top:198px;"><svg width="13" height="13" viewBox="0 0 24 24" fill="none" stroke="#4b5563" stroke-width="2" stroke-linecap="round" stroke-linejoin="round" ><circle cx="12" cy="12" r="10"/><polyline points="12 6 12 12 16 14"/></svg></div>
<div class="a" style="left:28px;top:196px;font-size:12.4px;color:#4b5563;line-height:16px">Geplant</div>
<div class="a" style="left:274px;top:196px;font-size:12px;font-weight:bold;letter-spacing:.4px;color:#374151;line-height:16px;transform:translateX(-100%)">20.0h / 30h</div>
<div class="a" style="left:12px;top:216px;width:262px;height:6px;border-radius:3px;background:#e5e7eb"></div>
<div class="a" style="left:12px;top:216px;width:175px;height:6px;border-radius:3px;background:#6f9474"></div>
<div class="a b-m" style="left:12px;top:230px;width:55px;height:20px;text-align:center;border-radius:4px;font-size:12.6px;line-height:20px">Service</div>
<div class="a" style="left:0px;top:262px;width:286px;height:1px;background:#e5e7eb"></div>
<div class="a" style="left:12px;top:279px;"><svg width="16" height="16" viewBox="0 0 24 24" fill="none" stroke="#b0b5bd" stroke-width="2" stroke-linecap="round" stroke-linejoin="round" ><circle cx="9" cy="12" r="1"/><circle cx="9" cy="5" r="1"/><circle cx="9" cy="19" r="1"/><circle cx="15" cy="12" r="1"/><circle cx="15" cy="5" r="1"/><circle cx="15" cy="19" r="1"/></svg></div>
<div class="a" style="left:35.5px;top:281.5px;width:12px;height:12px;border-radius:50%;background:#3b82f6"></div>
<div class="a" style="left:56.5px;top:277.5px;font-size:17px;color:#1f2937;line-height:19px;-webkit-text-stroke:.45px #1f2937">Max Müller</div>
<div class="a" style="left:240px;top:277px;width:34px;height:20px;border-radius:4px;background:#f1f2f4;font-family:'Liberation Mono',monospace;font-size:12px;color:#4b5563;text-align:center;line-height:20px">MÜL</div>
<div class="a" style="left:12px;top:309px;"><svg width="13" height="13" viewBox="0 0 24 24" fill="none" stroke="#4b5563" stroke-width="2" stroke-linecap="round" stroke-linejoin="round" ><circle cx="12" cy="12" r="10"/><polyline points="12 6 12 12 16 14"/></svg></div>
<div class="a" style="left:28px;top:307px;font-size:12.4px;color:#4b5563;line-height:16px">Geplant</div>
<div class="a" style="left:274px;top:307px;font-size:12px;font-weight:bold;letter-spacing:.4px;color:#374151;line-height:16px;transform:translateX(-100%)">32.0h / 40h</div>
<div class="a" style="left:12px;top:327px;width:262px;height:6px;border-radius:3px;background:#e5e7eb"></div>
<div class="a" style="left:12px;top:327px;width:210px;height:6px;border-radius:3px;background:#6f9474"></div>
<div class="a b-m" style="left:12px;top:341px;width:55px;height:20px;text-align:center;border-radius:4px;font-size:12.6px;line-height:20px">Service</div>
<div class="a b-s" style="left:71.29999999999995px;top:341px;width:48px;height:20px;text-align:center;border-radius:4px;font-size:12.6px;line-height:20px">Küche</div>
<div class="a" style="left:0px;top:373px;width:286px;height:1px;background:#e5e7eb"></div>
<div class="a" style="left:12px;top:390px;"><svg width="16" height="16" viewBox="0 0 24 24" fill="none" stroke="#b0b5bd" stroke-width="2" stroke-linecap="round" stroke-linejoin="round" ><circle cx="9" cy="12" r="1"/><circle cx="9" cy="5" r="1"/><circle cx="9" cy="19" r="1"/><circle cx="15" cy="12" r="1"/><circle cx="15" cy="5" r="1"/><circle cx="15" cy="19" r="1"/></svg></div>
<div class="a" style="left:35.5px;top:392.5px;width:12px;height:12px;border-radius:50%;background:#f59e0b"></div>
<div class="a" style="left:56.5px;top:388.5px;font-size:17px;color:#1f2937;line-height:19px;-webkit-text-stroke:.45px #1f2937">Tom Weber</div>
<div class="a" style="left:240px;top:388px;width:34px;height:20px;border-radius:4px;background:#f1f2f4;font-family:'Liberation Mono',monospace;font-size:12px;color:#4b5563;text-align:center;line-height:20px">WEB</div>
<div class="a" style="left:12px;top:420px;"><svg width="13" height="13" viewBox="0 0 24 24" fill="none" stroke="#4b5563" stroke-width="2" stroke-linecap="round" stroke-linejoin="round" ><circle cx="12" cy="12" r="10"/><polyline points="12 6 12 12 16 14"/></svg></div>
<div class="a" style="left:28px;top:418px;font-size:12.4px;color:#4b5563;line-height:16px">Geplant</div>
<div class="a" style="left:274px;top:418px;font-size:12px;font-weight:bold;letter-spacing:.4px;color:#c53030;line-height:16px;transform:translateX(-100%)">28.0h / 20h</div>
<div class="a" style="left:12px;top:438px;width:262px;height:6px;border-radius:3px;background:#e5e7eb"></div>
<div class="a" style="left:12px;top:438px;width:262px;height:6px;border-radius:3px;background:#e04848"></div>
<div class="a b-s" style="left:12px;top:452px;width:48px;height:20px;text-align:center;border-radius:4px;font-size:12.6px;line-height:20px">Küche</div>
<div class="a b-w" style="left:64.29999999999995px;top:452px;width:43.5px;height:20px;text-align:center;border-radius:4px;font-size:12.6px;line-height:20px">Spüle</div>
<div class="a" style="left:0px;top:557px;width:286px;height:41px;background:#f8f9fb;border-top:1px solid #e5e7eb"></div>
<div class="a" style="left:12px;top:572px;"><svg width="12" height="12" viewBox="0 0 24 24" fill="#eab308" stroke="#eab308" stroke-width="2" stroke-linecap="round" stroke-linejoin="round" ><polygon points="12 2 15.09 8.26 22 9.27 17 14.14 18.18 21.02 12 17.77 5.82 21.02 7 14.14 2 9.27 8.91 8.26 12 2"/></svg></div>
<div class="a" style="left:28px;top:570px;font-size:12.7px;color:#6b7280;line-height:16px">Hauptbereich</div>
<div class="a" style="left:122px;top:572px;"><svg width="12.5" height="12.5" viewBox="0 0 24 24" fill="none" stroke="#dc4444" stroke-width="2.2" stroke-linecap="round" stroke-linejoin="round" ><path d="m21.73 18-8-14a2 2 0 0 0-3.48 0l-8 14A2 2 0 0 0 4 21h16a2 2 0 0 0 1.73-3Z"/><path d="M12 9v4"/><path d="M12 17h.01"/></svg></div>
<div class="a" style="left:136.5px;top:570px;font-size:13px;color:#6b7280;line-height:16px">Konflikt</div>
</div>
<div class="sbv"><i></i></div>
</body></html>
